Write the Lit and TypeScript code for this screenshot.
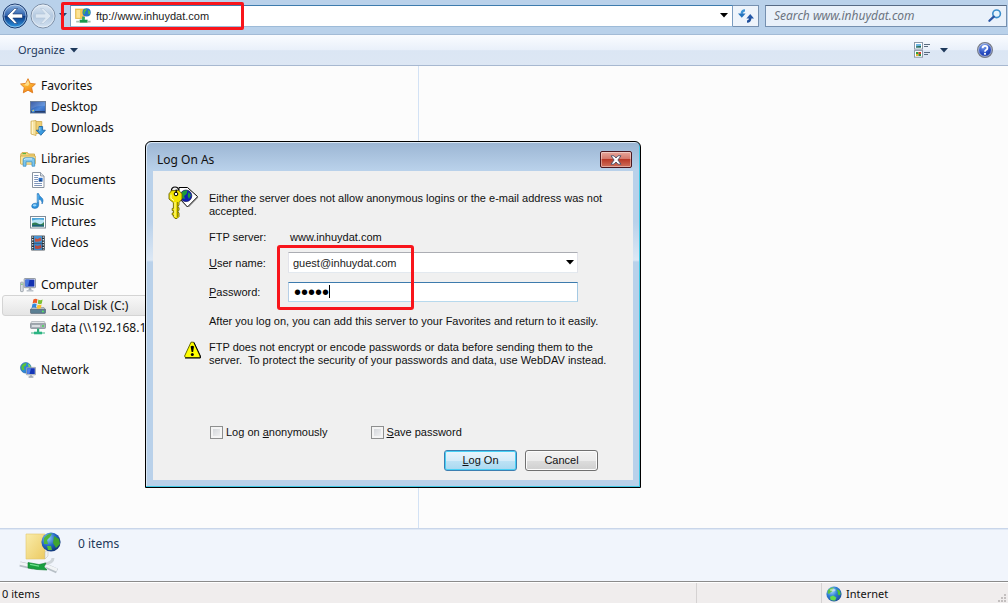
import { LitElement, html, css, svg, nothing } from "lit";
import { customElement } from "lit/decorators.js";
import { classMap } from "lit/directives/class-map.js";

const star = svg`<svg width="16" height="16" viewBox="0 0 16 16"><defs><linearGradient id="st" x1="0" y1="0" x2="0.4" y2="1"><stop offset="0" stop-color="#ffe9a0"/><stop offset=".5" stop-color="#fdb833"/><stop offset="1" stop-color="#f08a1c"/></linearGradient></defs><path d="M8 .7 10.2 5.4 15.4 6 11.6 9.6 12.7 14.8 8 12.2 3.3 14.8 4.3 9.6.6 6 5.8 5.4Z" fill="url(#st)" stroke="#e0791a" stroke-width=".9" stroke-linejoin="round"/><path d="M8 2.6 9.4 6 8 8 4.2 7.2" fill="#fff3c0" opacity=".6"/></svg>`;

const desktop = svg`<svg width="16" height="16" viewBox="0 0 16 16"><defs><linearGradient id="dk" x1="0" y1="0" x2="1" y2="1"><stop offset="0" stop-color="#1c3f94"/><stop offset=".6" stop-color="#4d86d8"/><stop offset="1" stop-color="#2a5bb4"/></linearGradient></defs><rect x=".5" y="2.5" width="15" height="11.5" fill="url(#dk)" stroke="#6d7f9a"/><path d="M1 3H15V7Q8 6 1 10Z" fill="#fff" opacity=".15"/><rect x="1" y="12" width="14" height="1.6" fill="#26406f"/><circle cx="3.2" cy="12" r="1.6" fill="#3b8fe0"/><path d="M2.4 11.8h1v-1" stroke="#ffd84a" fill="none"/></svg>`;

const downloads = svg`<svg width="16" height="16" viewBox="0 0 16 16"><path d="M5.5 1.5H11.8V13.5H5.5Z" fill="#efcf74" stroke="#c9a23f" stroke-width=".7"/><path d="M1 1.2 6 .5V15.5L1 14Z" fill="#f7e3a0" stroke="#c9a23f" stroke-width=".7"/><path d="M2.4 1.6V14" stroke="#fff6d2" stroke-width="1"/><path d="M9 6.5H12.6V10.2H15.4L10.8 15.3 6.3 10.2H9Z" fill="#3b9be0" stroke="#17609f" stroke-width=".8" stroke-linejoin="round"/><path d="M9.8 7.3V11" stroke="#9fd6f8"/></svg>`;

const libraries = svg`<svg width="16" height="16" viewBox="0 0 16 16"><path d="M.8 3 2 1.6H7.5L8.5 3H14.5V6H.8Z" fill="#f3d579" stroke="#c79f3c" stroke-width=".8"/><path d="M2.5 2.6H6" stroke="#55b13c" stroke-width="1.1"/><path d="M.5 5H15.3V12.5Q15.3 13.2 14.6 13.2H1.2Q.5 13.2.5 12.5Z" fill="#f9e49b" stroke="#cda641" stroke-width=".8"/><path d="M3.2 15.2V8.8Q3.2 6.8 5.2 6.8H12.7Q14.7 6.8 14.7 8.8V15.2H12V10.8H6V15.2Z" fill="#7cc6ee" stroke="#3c8fc4" stroke-width=".8"/><path d="M4.4 9Q4.4 7.9 5.6 7.9H12" stroke="#dff4ff" fill="none"/></svg>`;

const documents = svg`<svg width="16" height="16" viewBox="0 0 16 16"><path d="M2.5.5H10.5L14 4V15.5H2.5Z" fill="#fff" stroke="#7d8896" stroke-width=".9"/><path d="M10.5.5V4H14" fill="#d8dee6" stroke="#7d8896" stroke-width=".8"/><path d="M4.2 3.5H8.5M4.2 5.5H8M4.2 7.5H8M4.2 9.5H8M4.2 11.5H12M4.2 13.5H12" stroke="#7f95ba" stroke-width="1"/><rect x="8.6" y="5.8" width="4" height="3.6" fill="#2b6fc9"/><path d="M8.6 9.4 10.4 7.4 12.6 9.4Z" fill="#173f7c"/></svg>`;

const music = svg`<svg width="16" height="16" viewBox="0 0 16 16"><path d="M7.2.6H8.6Q9 2.8 11.4 4.4 14.3 6.6 12 11 12.4 7.2 8.7 6V12.3Q8.5 15.4 4.8 15.4 1.5 15.4 1.7 12.9 2 10.3 5.2 10.2 6.4 10.2 7.2 10.6Z" fill="#2f93dc" stroke="#1d6cb4" stroke-width=".6"/><ellipse cx="4.6" cy="12.3" rx="1.9" ry="1.1" fill="#9bd6fa"/><path d="M8 1.5V9" stroke="#8fd0f8" stroke-width=".7"/></svg>`;

const pictures = svg`<svg width="16" height="16" viewBox="0 0 16 16"><rect x=".5" y="2.5" width="15" height="11.5" fill="#fff" stroke="#7e8b98"/><rect x="2" y="4" width="12" height="8.5" fill="#b9e3f4"/><path d="M2 4H14V6Q8 5 2 6.6Z" fill="#4fa8dc"/><path d="M2 9.5Q5 7.5 8 9.5T14 8V12.5H2Z" fill="#2f7d55"/><path d="M2 11.2Q8 10 14 11.4V12.5H2Z" fill="#1e5f7e"/></svg>`;

const videos = svg`<svg width="16" height="16" viewBox="0 0 16 16"><rect x="1.3" y=".6" width="13.4" height="14.8" fill="#23303c"/><rect x="4" y="1" width="8" height="6.8" fill="#4794d4"/><rect x="4" y="8.4" width="8" height="6.6" fill="#3c85c8"/><path d="M5 3Q7.5 5 10.5 2.5L11.5 5.5Q8 7.5 4.8 6.5Z" fill="#c5533f"/><path d="M5 10Q8 12 11 9.6L11.4 13Q7.5 14.6 5 13.6Z" fill="#b84a3e"/><path d="M2.7 1.5V15M13.3 1.5V15" stroke="#e9eef2" stroke-width="1.3" stroke-dasharray="1.3 1.3"/></svg>`;

const computer = svg`<svg width="16" height="16" viewBox="0 0 16 16"><rect x=".6" y="5.2" width="2.6" height="9.4" rx=".5" fill="#dfe3e8" stroke="#8e979f" stroke-width=".8"/><path d="M1.2 7.2H2.6" stroke="#4fbf3f"/><rect x="4.2" y="1.5" width="11.3" height="9.2" rx=".6" fill="#e3e7ec" stroke="#8a939c" stroke-width=".9"/><rect x="5.4" y="2.6" width="9" height="7" fill="#1331b0"/><path d="M5.4 2.6H9.6L8 9.6H5.4Z" fill="#4676e0"/><path d="M9 11H11L11.6 13H8.4Z" fill="#a7afb8"/><path d="M6.6 13.8H13.4" stroke="#b5bcc4" stroke-width="1.4"/></svg>`;

const localDisk = svg`<svg width="16" height="16" viewBox="0 0 16 16"><path d="M2 9.5H14L15.6 12H.4Z" fill="#cdd3da" stroke="#7f8891" stroke-width=".6"/><rect x=".4" y="11.2" width="15.2" height="4.2" rx=".8" fill="#5b7f93" stroke="#4b5866" stroke-width=".6"/><circle cx="12.9" cy="13.4" r=".9" fill="#5af05a"/><path d="M3.4 1.4Q5.5 0 7.5 1.2L6.8 5.2Q4.8 4 2.6 5.4Z" fill="#ee5a24"/><path d="M8.4 1.6Q10.4 2.8 12.6 1.4L11.8 5.4Q9.8 6.8 7.7 5.5Z" fill="#7cc133"/><path d="M2.4 6.2Q4.5 5 6.6 6.1L5.9 9.9Q3.8 8.8 1.7 10Z" fill="#2f86dc"/><path d="M7.5 6.5Q9.5 7.7 11.6 6.4L10.9 10.1Q9 11.4 6.8 10.2Z" fill="#fbc22c"/></svg>`;

const networkDisk = svg`<svg width="16" height="16" viewBox="0 0 16 16"><path d="M1.6 1.6H14.4L15.6 4H.4Z" fill="#e8ebee" stroke="#8d959c" stroke-width=".6"/><rect x=".4" y="3.8" width="15.2" height="4.6" rx=".8" fill="#aab2ba" stroke="#737c85" stroke-width=".7"/><path d="M2 6H10" stroke="#e5e9ec" stroke-width="1.6"/><circle cx="13" cy="6" r=".9" fill="#3fe04a"/><rect x="7" y="8.6" width="2.2" height="3.4" fill="#2fae7a"/><path d="M4 13H12" stroke="#2bb583" stroke-width="2.6"/><path d="M1 13H4M12 13H15" stroke="#7fcfae" stroke-width="1.4"/></svg>`;

const network = svg`<svg width="16" height="16" viewBox="0 0 16 16"><circle cx="5.8" cy="5.8" r="5.3" fill="#2b86d9" stroke="#1c5fa5" stroke-width=".6"/><path d="M2 3Q4 .8 6.5 1L6 3.5 3.8 5 4.6 7.4 2.6 8.6Q.4 6 2 3Z" fill="#58c13c"/><path d="M8 1.5Q10.5 2.8 10.8 5L8.6 5.4Z" fill="#7ed957"/><rect x="6.4" y="5.4" width="9.2" height="7.4" rx=".5" fill="#dfe4ea" stroke="#808a95" stroke-width=".7"/><rect x="7.2" y="6.2" width="7.6" height="5.8" fill="#1436b8"/><path d="M7.2 6.2H11L9.5 12H7.2Z" fill="#4f80ea"/><path d="M8.6 15H13.4M11 13V15" stroke="#9aa3ad" stroke-width="1.3"/></svg>`;

const globe = (size: number) => svg`<svg width=${size} height=${size} viewBox="0 0 20 20"><defs><radialGradient id="gl" cx=".35" cy=".3" r=".8"><stop offset="0" stop-color="#a9dcfb"/><stop offset=".45" stop-color="#2f7fd6"/><stop offset="1" stop-color="#1b4a94"/></radialGradient></defs><circle cx="10" cy="10" r="9.5" fill="url(#gl)"/><path d="M2.5 5Q6 1 10 2L8 5 8 7 5 8.5 4 10 2 9Z" fill="#5dc245"/><path d="M13 4 17 5.5 18.4 10 16.5 12 14.5 10 15 8Z" fill="#4bc336"/><path d="M5 13.5 9 12 13 14.5 11.5 18Q7.5 18.6 5.6 16.8Z" fill="#66dc4a"/><ellipse cx="8.5" cy="5" rx="3.6" ry="2" fill="#fff" opacity=".5"/></svg>`;

const ftpSite = (size: number) => svg`<svg width=${size} height=${size} viewBox="0 0 42 42"><defs><linearGradient id="fd" x1="0" y1="0" x2="1" y2="1"><stop offset="0" stop-color="#f9ecaa"/><stop offset="1" stop-color="#ecca62"/></linearGradient><radialGradient id="fg" cx=".35" cy=".3" r=".8"><stop offset="0" stop-color="#8fd0f8"/><stop offset=".5" stop-color="#2467c4"/><stop offset="1" stop-color="#0b2b66"/></radialGradient></defs><path d="M7 2H26V27H7Z" fill="url(#fd)" stroke="#e3c66d" stroke-width=".6"/><path d="M26 20 29 18V24L26 27Z" fill="#f2f2f0" stroke="#b9b9b4" stroke-width=".5"/><path d="M1 32 14 35M27 34 38 39" stroke="#b7bfc6" stroke-width="5"/><path d="M1 31.4 14 34.2M27 33.4 38 38" stroke="#f1f4f6" stroke-width="3"/><path d="M25 32Q34 31 34 26" stroke="#cfd5da" stroke-width="3" fill="none"/><path d="M9 30.5 20 32.5 27 31 25 35 28 38 18 37.5 9 36Z" fill="#18a03f" stroke="#0c7a2c" stroke-width=".6"/><path d="M11 32.3 20 34.2" stroke="#6fe08c" stroke-width="1.2"/><circle cx="32" cy="10" r="9.6" fill="url(#fg)"/><path d="M25 6Q28 1.6 33 1.4L31 5 28 8 29 12 25 12Z" fill="#4fb63b"/><path d="M35 4 40 7 41 12 37 16 34 11Z" fill="#3fa531"/><path d="M28 14 32 14 33 18 29 18Z" fill="#52bd3b"/></svg>`;

const ftpSmall = svg`<svg width="16" height="16" viewBox="0 0 16 16"><rect x=".5" y="1" width="9" height="9.6" fill="#f4c850" stroke="#d9b040" stroke-width=".6"/><path d="M1.4 2H5V9.8H1.4Z" fill="#fbe396"/><path d="M8 8V12.5" stroke="#8e9790" stroke-width="1.6"/><circle cx="11.6" cy="4.4" r="4.1" fill="#2474cc"/><path d="M8.6 2.4Q10.4.4 12 .7L11 3 9.6 4 10 6 8.4 5.6ZM13 2 15.2 3.4 15 6 13.4 6.6Z" fill="#58be3f"/><path d="M4.6 13.2H12.6" stroke="#199a4d" stroke-width="3"/><path d="M1.2 13.6H4.6M12.6 13.6H15.6" stroke="#a9c0b2" stroke-width="1.6"/><rect x="7.2" y="9" width="2.6" height="3" fill="#2fae62"/></svg>`;

const key = svg`<svg width="31" height="34" viewBox="0 0 31 34"><path d="M11 1.5H19.5L29.5 10.5 19.5 21 11 12Z" fill="#fff" stroke="#000"/><path d="M20.5 20.5 29.8 11" stroke="#777" stroke-width="1.4"/><circle cx="18" cy="9.8" r="5.8" fill="#1220b4" stroke="#000040" stroke-width=".6"/><path d="M14 6Q17 3.6 19.5 4.6L18.5 8 16 10 17 13 14 12ZM20.5 6 23 9 21 13 19.6 10Z" fill="#1f9b3a"/><path d="M3.4 5Q3.4 1 7 1 10.6 1 10.4 4.5" fill="none" stroke="#000" stroke-width="1.2"/><path d="M3.6 4.6H11L14 7.8V13L11 16.6V19L10 20.4 11 22V24L10 25.6 11 27.2V30.5L9 32.5H7L5.4 30.5V29H4.2V27H5.4V24.5H4.2V22.4H5.4V16.6L1 13V7.8Z" fill="#f4e500" stroke="#6b6400" stroke-width=".9"/><path d="M7 16V31" stroke="#fffbb0"/><path d="M9.4 16V31" stroke="#8a8000"/><circle cx="8" cy="8" r="1.8" fill="#fff" stroke="#000" stroke-width="1"/><path d="M3 8.6V12.4L6 14.6" stroke="#fffcc4" fill="none"/><path d="M8.2 7V3.6" stroke="#000" stroke-width="1.2"/></svg>`;

const warning = svg`<svg width="17" height="18" viewBox="0 0 17 18"><path d="M7 1.2H9.6L16 15V16.6H1.4L.6 15Z" fill="#ffff00" stroke="#6a6a00" stroke-width="1" stroke-linejoin="round"/><path d="M1 17H16.4V15L10 1.4" stroke="#000" fill="none"/><path d="M6.6 5.4Q8.3 4 10 5.4L9.1 11H7.6Z" fill="#000"/><circle cx="8.3" cy="13.5" r="1.5" fill="#000"/></svg>`;

const arrow = (dir: "left" | "right", on: boolean) => svg`<svg width="26" height="26" viewBox="0 0 26 26"><defs><linearGradient id="nv" x1="0" y1="0" x2="0" y2="1"><stop offset="0" stop-color="#8db4e0"/><stop offset=".48" stop-color="#2f62ae"/><stop offset=".52" stop-color="#0c3a86"/><stop offset="1" stop-color="#2f9be6"/></linearGradient><linearGradient id="nd" x1="0" y1="0" x2="0" y2="1"><stop offset="0" stop-color="#dfe9f4"/><stop offset=".5" stop-color="#b4c9e0"/><stop offset="1" stop-color="#d3e2f1"/></linearGradient></defs><circle cx="13" cy="13" r="12" fill=${on ? "url(#nv)" : "url(#nd)"} stroke=${on ? "#1b3a6d" : "#7d8fa6"}/><circle cx="13" cy="13" r="11" fill="none" stroke="#fff" stroke-opacity=".45"/><path d=${dir === "left" ? "M12.5 5.5 5 13 12.5 20.5H15.5L10.8 15H20.5V11H10.8L15.5 5.5Z" : "M13.5 5.5 21 13 13.5 20.5H10.5L15.2 15H5.5V11H15.2L10.5 5.5Z"} fill=${on ? "#fff" : "#dce7f2"} stroke=${on ? "#17386d" : "#b3c4d6"} stroke-width=".6" stroke-linejoin="round"/></svg>`;

const caret = (color: string) => svg`<svg width="8" height="5" viewBox="0 0 8 5"><path d="M0 0H8L4 4.6Z" fill=${color}/></svg>`;

const refresh = svg`<svg width="16" height="14" viewBox="0 0 16 14"><path d="M7 1.4Q3.8 1.4 3.8 4.8" fill="none" stroke="#3b93d6" stroke-width="2.4"/><path d="M0 4.4H7.6L3.8 8.8Z" fill="#2473bd"/><path d="M9 12.6Q12.2 12.6 12.2 9" fill="none" stroke="#1f4f9c" stroke-width="2.4"/><path d="M8.4 9.4H16L12.2 5Z" fill="#2458a8"/></svg>`;

const search = svg`<svg width="14" height="13" viewBox="0 0 14 13"><circle cx="8.6" cy="4.8" r="3.8" fill="#e6f4fc" stroke="#3b8ecb" stroke-width="1.6"/><path d="M5.8 7.6 1.4 11.8" stroke="#2a56a4" stroke-width="2.2" stroke-linecap="round"/></svg>`;

const views = svg`<svg width="17" height="16" viewBox="0 0 17 16"><rect x=".5" y=".5" width="8" height="6.6" fill="#fff" stroke="#8b98a8"/><rect x="2" y="2" width="5" height="3.6" fill="#6db6e2"/><path d="M2 5.6V4.4L7 4V5.6Z" fill="#1f5f3a"/><rect x=".5" y="8.6" width="8" height="6.6" fill="#fff" stroke="#8b98a8"/><rect x="2" y="10" width="2.5" height="2" fill="#2f9e3c"/><rect x="4.5" y="10" width="2.5" height="2" fill="#d33a2c"/><rect x="2" y="12" width="2.5" height="2" fill="#e2b32b"/><rect x="4.5" y="12" width="2.5" height="2" fill="#2d8d3a"/><path d="M10 2.5H16M10 4.5H14M10 10.5H16M10 12.5H14" stroke="#5b6c80"/></svg>`;

const help = svg`<svg width="16" height="16" viewBox="0 0 16 16"><defs><radialGradient id="hp" cx=".4" cy=".25" r=".85"><stop offset="0" stop-color="#7da2f0"/><stop offset=".6" stop-color="#2347bd"/><stop offset="1" stop-color="#16308c"/></radialGradient></defs><circle cx="8" cy="8" r="7.4" fill="url(#hp)" stroke="#7b7f88" stroke-width="1.2"/><circle cx="8" cy="8" r="6.4" fill="none" stroke="#d7dbe6" stroke-width=".7"/><path d="M5.6 6.2Q5.6 3.8 8 3.8 10.4 3.8 10.4 6 10.4 7.3 9 8 8 8.5 8 9.7" fill="none" stroke="#fff" stroke-width="1.8"/><circle cx="8" cy="11.8" r="1.1" fill="#fff"/></svg>`;

const close = svg`<svg width="12" height="10" viewBox="0 0 12 10"><path d="M1 .8H4L6 3 8 .8H11L7.9 5 11 9.2H8L6 7 4 9.2H1L4.1 5Z" fill="#fff" stroke="#4a4f68" stroke-width=".9" stroke-linejoin="round"/></svg>`;

const grip = svg`<svg width="10" height="10" viewBox="0 0 10 10"><path d="M8 1h2v2H8zM8 4h2v2H8zM8 7h2v2H8zM5 4h2v2H5zM5 7h2v2H5zM2 7h2v2H2z" fill="#c3bfbf"/></svg>`;

type Item = { label: string; icon: unknown; selected?: boolean };
type Group = { head: Item; items: Item[] };

const groups: Group[] = [
  { head: { label: "Favorites", icon: star }, items: [{ label: "Desktop", icon: desktop }, { label: "Downloads", icon: downloads }] },
  {
    head: { label: "Libraries", icon: libraries },
    items: [
      { label: "Documents", icon: documents },
      { label: "Music", icon: music },
      { label: "Pictures", icon: pictures },
      { label: "Videos", icon: videos },
    ],
  },
  {
    head: { label: "Computer", icon: computer },
    items: [
      { label: "Local Disk (C:)", icon: localDisk, selected: true },
      { label: "data (\\\\192.168.1.2)", icon: networkDisk },
    ],
  },
  { head: { label: "Network", icon: network }, items: [] },
];

@customElement("nav-tree")
class NavTree extends LitElement {
  static styles = css`
    :host { display: block; padding: 9px 8px 0 2px; }
    .group { margin-bottom: 10px; }
    .group:nth-child(n + 2) { margin-bottom: 21px; }
    a {
      display: flex; align-items: center; gap: 5px; height: 21px; box-sizing: border-box;
      padding-left: 17px; border: 1px solid transparent; border-radius: 3px;
      color: #111; text-decoration: none; white-space: nowrap; line-height: 19px;
    }
    a.child { padding-left: 27px; }
    a.selected { background: linear-gradient(#f8f8f8, #e5e5e5); border-color: #d4d4d4; margin-bottom: 1px; }
    svg { display: block; flex: none; }
  `;
  row(item: Item, child: boolean) {
    return html`<a href="#" class=${classMap({ child, selected: !!item.selected })}>${item.icon}<span>${item.label}</span></a>`;
  }
  render() {
    return groups.map((g) => html`<div class="group">${this.row(g.head, false)}${g.items.map((i) => this.row(i, true))}</div>`);
  }
}

@customElement("logon-dialog")
class LogonDialog extends LitElement {
  static styles = css`
    :host {
      display: block; box-sizing: border-box; border: 1px solid #000; border-radius: 6px 6px 0 0;
      background: linear-gradient(#9bb5d3, #b9d1ea 28px, #b9d1ea 80px, #dce8f5 118px, #b9d1ea 120px);
      box-shadow: inset -1px -1px #3fc8e4, inset 1px 1px #dbe8f5;
      padding: 0 7px 7px; color: #111;
      font: 11px/13px "Liberation Sans", Arial, sans-serif;
    }
    svg { display: block; }
    header { display: flex; align-items: center; justify-content: space-between; height: 29px; padding: 6px 1px 0 4px; box-sizing: border-box; }
    h1 { margin: 0; font: 12px/18px "Noto Sans", sans-serif; }
    .close {
      display: grid; place-items: center; width: 32px; height: 17px; padding: 0; border: 1px solid #4b1820; border-radius: 2px;
      background: linear-gradient(#e7a79c, #d5776a 48%, #b93a28 50%, #d0705c);
      box-shadow: inset 0 0 0 1px #ffffff66;
    }
    form { background: #f0f0f0; padding: 15px 20px 9px 15px; display: grid; grid-template-columns: 41px 1fr; align-items: start; }
    p { margin: 0; }
    .intro { padding-top: 6px; }
    .fields { grid-column: 2; display: grid; grid-template-columns: 79px 290px; align-items: center; margin-top: 11px; }
    .fields > * { min-height: 13px; }
    .server { padding-left: 2px; }
    .box { display: flex; align-items: center; box-sizing: border-box; height: 21px; background: #fff; border: 1px solid; border-color: #abadb3 #e2e3ea #e3e9ef #e2e3ea; }
    .user { margin: 8px 0 9px; }
    .pass { border-color: #3d7bad #a4c9e3 #b7d9ed #b5cfe7; position: relative; height: 20px; }
    .box input { flex: 1; min-width: 0; height: 17px; border: 0; padding: 0 4px; background: none; outline: none; font: inherit; color: #222; }
    .pass input { font: 20px/17px "Liberation Sans", Arial, sans-serif; padding: 0 5px; color: #000; }
    .caret { position: absolute; left: 40px; top: 2px; width: 1px; height: 13px; background: #000; }
    .drop { border: 0; background: none; padding: 0 3px; height: 17px; display: grid; place-items: center; }
    .after { grid-column: 2; margin-top: 13px; }
    .warn { margin: 13px 0 0 16px; }
    .warn-text { margin-top: 13px; }
    .checks { grid-column: 2; display: flex; gap: 42px; margin-top: 59px; }
    .checks label { display: flex; align-items: center; gap: 3px; }
    .checks input {
      appearance: none; margin: 0 0 0 1px; width: 13px; height: 13px; border: 1px solid #8e8f8f; background: linear-gradient(135deg, #cdd0d5, #f6f6f6);
      box-shadow: inset 0 0 0 2px #f4f4f4;
    }
    .buttons { grid-column: 1 / -1; display: flex; justify-content: flex-end; gap: 8px; margin: 11px 15px 0 0; }
    .buttons button {
      width: 73px; height: 21px; border: 1px solid #707070; border-radius: 3px; font: inherit; padding: 0; color: #111;
      background: linear-gradient(#f2f2f2, #ebebeb 50%, #dddddd 50%, #cfcfcf); box-shadow: inset 0 0 0 1px #fcfcfc;
    }
    .buttons .ok { border-color: #3c7fb1; background: linear-gradient(#eaf5fc, #d6ecf9 50%, #bee3f6 50%, #a9d8f0); box-shadow: inset 0 0 0 1px #48d0f5; }
    .mark { position: absolute; left: 131px; top: 103px; width: 137px; height: 65px; box-sizing: border-box; border: 3px solid #f8151b; border-radius: 3px; pointer-events: none; }
  `;
  render() {
    return html`
      <header><h1>Log On As</h1><button class="close" aria-label="Close">${close}</button></header>
      <form @submit=${(e: Event) => e.preventDefault()}>
        ${key}
        <p class="intro">Either the server does not allow anonymous logins or the e-mail address was not<br />accepted.</p>
        <div class="fields">
          <span>FTP server:</span><span class="server">www.inhuydat.com</span>
          <label for="user"><u>U</u>ser name:</label>
          <div class="box user"><input id="user" type="text" value="guest@inhuydat.com" /><button type="button" class="drop" aria-label="Show user names">${caret("#000")}</button></div>
          <label for="pass"><u>P</u>assword:</label>
          <div class="box pass"><input id="pass" type="password" value="guest" /><span class="caret"></span></div>
        </div>
        <p class="after">After you log on, you can add this server to your Favorites and return to it easily.</p>
        <div class="warn">${warning}</div>
        <p class="warn-text">FTP does not encrypt or encode passwords or data before sending them to the<br />server.&nbsp; To protect the security of your passwords and data, use WebDAV instead.</p>
        <div class="checks">
          <label><input type="checkbox" /><span>Log on <u>a</u>nonymously</span></label>
          <label><input type="checkbox" /><span><u>S</u>ave password</span></label>
        </div>
        <div class="buttons"><button class="ok"><span><u>L</u>og On</span></button><button type="button">Cancel</button></div>
      </form>
      <div class="mark"></div>
    `;
  }
}

@customElement("app-root")
class AppRoot extends LitElement {
  static styles = css`
    :host { display: flex; flex-direction: column; height: 100vh; min-height: 560px; overflow: hidden; font: 12px/18px "Noto Sans", sans-serif; color: #111; background: #fcfcfc; }
    svg { display: block; flex: none; }
    button { border: 0; background: none; padding: 0; font: inherit; color: inherit; }
    .address { position: relative; display: flex; align-items: center; height: 35px; box-sizing: border-box; padding: 0 1px 3px 2px; background: #b9d1ea; border-bottom: 1px solid #a3bbd6; }
    .address > button { margin-right: 2px; }
    .address .recent { margin: 0 3px 0 1px; }
    .url, .find { display: flex; align-items: center; height: 22px; box-sizing: border-box; border: 1px solid #7590b0; border-top-color: #566a84; }
    .url { flex: 1; background: #fff; border-color: #3d7bad #7a9cc0 #9dbbd8; padding-left: 4px; gap: 5px; }
    .address input { flex: 1; min-width: 0; border: 0; padding: 0; background: none; outline: none; }
    .url input { font: 11px/16px "Liberation Sans", Arial, sans-serif; color: #222; }
    .url button { padding: 0 4px; }
    .refresh { display: grid; place-items: center; width: 26px; height: 22px; box-sizing: border-box; border: 1px solid #7590b0; background: #eef4fb; }
    .address > .refresh { margin: 0 6px 0 0; border-left: 0; }
    .find { width: 242px; background: #e9f1fa; padding: 0 4px 0 8px; }
    .find input { font: italic 12px/18px "Noto Sans", sans-serif; }
    .find input::placeholder { color: #6c7480; opacity: 1; }
    .mark { position: absolute; left: 61px; top: 2px; width: 183px; height: 28px; box-sizing: border-box; border: 3px solid #f8151b; border-radius: 2px; pointer-events: none; }
    .tools { display: flex; align-items: center; height: 31px; box-sizing: border-box; padding: 0 15px 0 18px; background: linear-gradient(#fafcff, #e9f0fa 50%, #dbe6f4 52%, #dde7f4); border-bottom: 1px solid #a7b8d0; color: #1e395b; font-size: 11px; }
    .tools button { display: flex; align-items: center; gap: 5px; }
    .tools .view { margin-left: auto; margin-right: 29px; gap: 9px; }
    .main { flex: 1; min-height: 0; display: grid; grid-template-columns: 419px 1fr; position: relative; }
    .main nav { border-right: 1px solid #d3e2f5; overflow: hidden; }
    logon-dialog { position: absolute; left: 145px; top: 75px; width: 496px; }
    .details { display: flex; gap: 17px; height: 53px; box-sizing: border-box; padding: 3px 19px; background: #f1f5fc; border-top: 1px solid #c9d6ea; box-shadow: inset 0 1px #dfe8f5; color: #1e395b; }
    .details p { margin: 0; padding-top: 3px; }
    .status { display: flex; height: 22px; box-sizing: border-box; border-top: 1px solid #8b8b8b; background: #f0eded; box-shadow: inset 0 1px #fff; font-size: 11px; line-height: 16px; padding-top: 1px; }
    .status > div { display: flex; align-items: center; gap: 4px; padding: 2px 2px 0; }
    .status > div + div { border-left: 1px solid #d5d2d2; }
    .count { flex: 1; }
    .blank { width: 120px; }
    .status .zone { width: 180px; padding-left: 4px; }
    .zone span { flex: 1; }
    .grip { align-self: flex-end; }
  `;
  render() {
    return html`
      <div class="address">
        <button aria-label="Back">${arrow("left", true)}</button>
        <button aria-label="Forward">${arrow("right", false)}</button>
        <button class="recent" aria-label="Recent pages">${caret("#1e4470")}</button>
        <div class="url">${ftpSmall}<input type="text" aria-label="Address" value="ftp://www.inhuydat.com" /><button aria-label="Previous locations">${caret("#000")}</button></div>
        <button class="refresh" aria-label="Refresh">${refresh}</button>
        <div class="find"><input type="search" aria-label="Search" placeholder="Search www.inhuydat.com" />${search}</div>
        <div class="mark"></div>
      </div>
      <div class="tools">
        <button>Organize ${caret("#1e395b")}</button>
        <button class="view" aria-label="Change your view">${views}${caret("#1e395b")}</button>
        <button aria-label="Help">${help}</button>
      </div>
      <div class="main">
        <nav><nav-tree></nav-tree></nav>
        <logon-dialog role="dialog" aria-label="Log On As"></logon-dialog>
      </div>
      <div class="details">${ftpSite(42)}<p>0 items</p></div>
      <div class="status">
        <div class="count">0 items</div>
        <div class="blank">${nothing}</div>
        <div class="zone">${globe(16)}<span>Internet</span><div class="grip">${grip}</div></div>
      </div>
    `;
  }
}
